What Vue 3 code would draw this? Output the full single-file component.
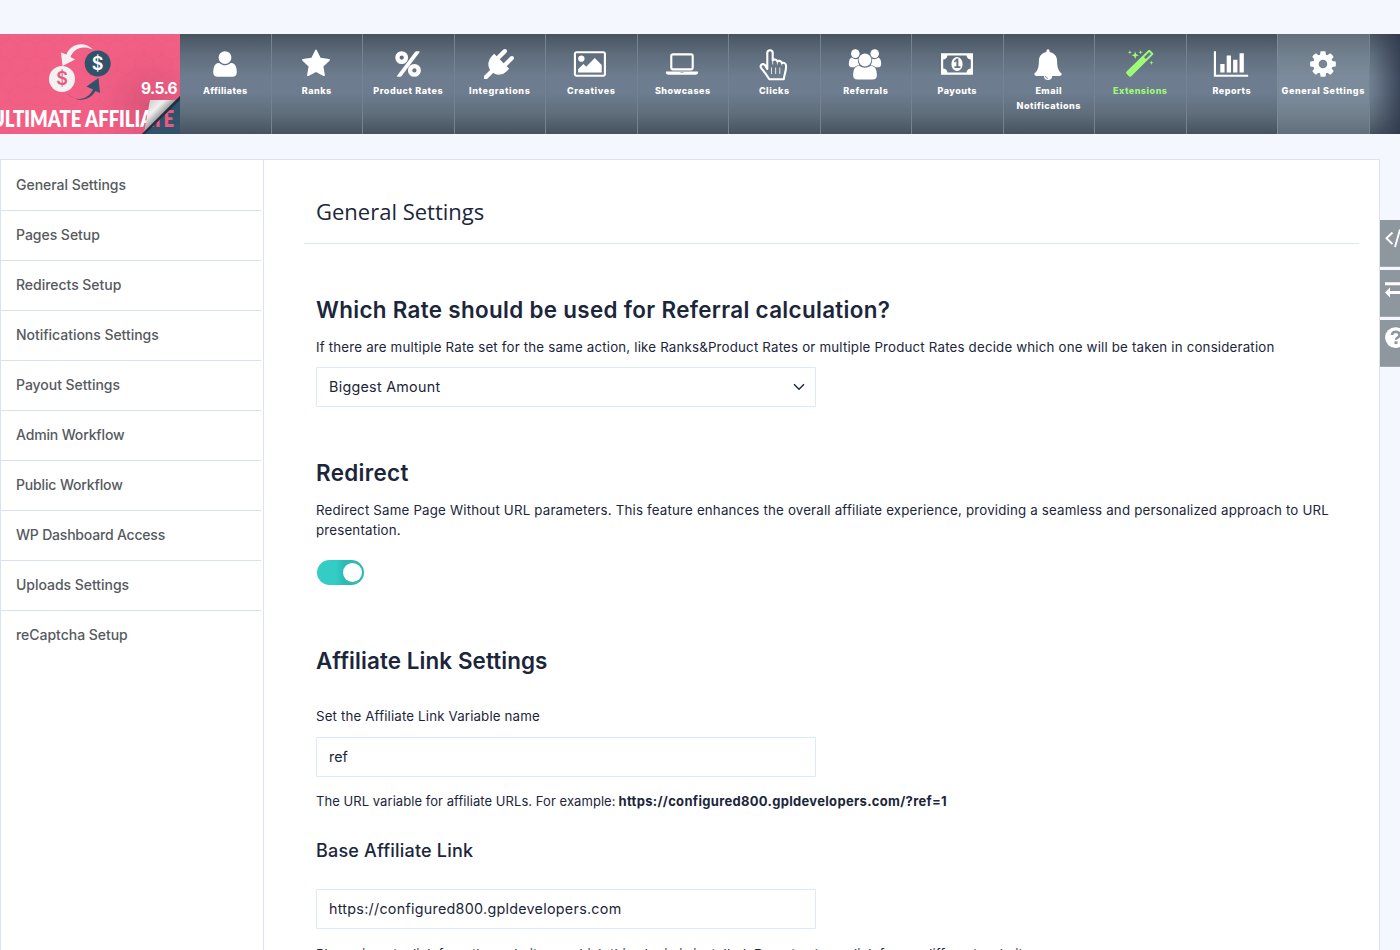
<script setup>
const tabs = [
  { id: 'user', label: 'Affiliates', cls: 'ls-s' },
  { id: 'star', label: 'Ranks', cls: 'ls-m' },
  { id: 'percent', label: 'Product Rates', cls: 'ls-l' },
  { id: 'plug', label: 'Integrations', cls: 'ls-l' },
  { id: 'image', label: 'Creatives', cls: 'ls-l' },
  { id: 'laptop', label: 'Showcases', cls: 'ls-m' },
  { id: 'hand', label: 'Clicks', cls: 'ls-m' },
  { id: 'users', label: 'Referrals', cls: 'ls-m' },
  { id: 'money', label: 'Payouts', cls: 'ls-m' },
  { id: 'bell', label: 'Email Notifications', cls: 'ls-m' },
  { id: 'magic', label: 'Extensions', cls: 'ls-m', green: true },
  { id: 'chart', label: 'Reports', cls: 'ls-m' },
  { id: 'cog', label: 'General Settings', cls: 'ls-l', active: true },
]
const paths = {
  user: 'M1600 1405q0 120-73 189.5t-194 69.5h-874q-121 0-194-69.5t-73-189.5q0-53 3.500-103.500t14-109 26.500-108.500 43-97.500 62-81 85.500-53.500 111.500-20q9 0 42 21.500t74.500 48 108 48 133.500 21.500 133.500-21.500 108-48 74.500-48 42-21.500q61 0 111.500 20t85.500 53.500 62 81 43 97.500 26.500 108.500 14 109 3.500 103.500zm-320-893q0 159-112.500 271.500t-271.500 112.500-271.500-112.500-112.500-271.500 112.500-271.500 271.500-112.500 271.500 112.500 112.500 271.500z',
  star: 'M1728 647q0 22-26 48l-363 354 86 500q1 7 1 20 0 21-10.500 35.500t-30.500 14.500q-19 0-40-12l-449-236-449 236q-22 12-40 12-21 0-31.500-14.500t-10.500-35.500q0-6 2-20l86-500-364-354q-25-27-25-48 0-37 56-46l502-73 225-455q19-41 49-41t49 41l225 455 502 73q56 9 56 46z',
  plug: 'M1755 453q37 38 37 90.500t-37 90.500l-401 400 150 150-160 160q-163 163-389.500 186.500t-411.500-100.500l-362 362h-181v-181l362-362q-124-185-100.500-411.500t186.500-389.500l160-160 150 150 400-401q38-37 91-37t90 37 37 90.500-37 90.500l-400 401 234 234 401-400q38-37 91-37t90 37z',
  image: 'M512 576q0 80-56 136t-136 56-136-56-56-136 56-136 136-56 136 56 56 136zm1024 384v448h-1408v-192l320-320 160 160 512-512zm96-704h-1600q-13 0-22.500 9.500t-9.500 22.500v1216q0 13 9.500 22.500t22.500 9.500h1600q13 0 22.500-9.500t9.500-22.500v-1216q0-13-9.500-22.500t-22.500-9.500zm160 32v1216q0 66-47 113t-113 47h-1600q-66 0-113-47t-47-113v-1216q0-66 47-113t113-47h1600q66 0 113 47t47 113z',
  laptop: 'M352 1280q-66 0-113-47t-47-113v-704q0-66 47-113t113-47h1088q66 0 113 47t47 113v704q0 66-47 113t-113 47h-1088zm-32-864v704q0 13 9.500 22.500t22.500 9.500h1088q13 0 22.500-9.500t9.500-22.500v-704q0-13-9.500-22.500t-22.500-9.500h-1088q-13 0-22.500 9.500t-9.500 22.500zm1376 928h160v96q0 40-47 68t-113 28h-1600q-66 0-113-28t-47-68v-96h1760zm-720 96q16 0 16-16t-16-16h-160q-16 0-16 16t16 16h160z',
  chart: 'M512 896v512h-256v-512h256zm384-512v1024h-256v-1024h256zm1024 1152v128h-2048v-1536h128v1408h1920zm-640-896v768h-256v-768h256zm384-384v1152h-256v-1152h256z',
  cog: 'M1152 896q0-106-75-181t-181-75-181 75-75 181 75 181 181 75 181-75 75-181zm512-109v222q0 12-8 23t-20 13l-185 28q-19 54-39 91 35 50 107 138 10 12 10 25t-9 23q-27 37-99 108t-94 71q-12 0-26-9l-138-108q-44 23-91 38-16 136-29 186-7 28-36 28h-222q-14 0-24.500-8.500t-11.500-21.500l-28-184q-49-16-90-37l-141 107q-10 9-25 9-14 0-25-11-126-114-165-168-7-10-7-23 0-12 8-23 15-21 51-66.500t54-70.500q-27-50-41-99l-183-27q-13-2-21-12.500t-8-23.500v-222q0-12 8-23t19-13l186-28q14-46 39-92-40-57-107-138-10-12-10-24 0-10 9-23 26-36 98.500-107.500t94.500-71.500q13 0 26 10l138 107q44-23 91-38 16-136 29-186 7-28 36-28h222q14 0 24.500 8.500t11.500 21.500l28 184q49 16 90 37l142-107q9-9 24-9 13 0 25 10 129 119 165 170 7 8 7 22 0 12-8 23-15 21-51 66.500t-54 70.500q26 50 41 98l183 28q13 2 21 12.500t8 23.500z',
}
const sections = [
  'General Settings', 'Pages Setup', 'Redirects Setup', 'Notifications Settings', 'Payout Settings',
  'Admin Workflow', 'Public Workflow', 'WP Dashboard Access', 'Uploads Settings', 'reCaptcha Setup',
]
</script>

<template>
  <div class="page">
    <header class="bar">
      <div class="brand">
        <svg width="180" height="100" viewBox="0 0 180 100">
          <defs>
            <pattern id="hex" width="18" height="31" patternUnits="userSpaceOnUse">
              <path d="M9 0v5l9 5v11l-9 5v5M9 5l-9 5v11l9 5" fill="none" stroke="#d94f74" stroke-opacity=".22" />
            </pattern>
            <linearGradient id="curl" x1="150" y1="66" x2="168" y2="84" gradientUnits="userSpaceOnUse">
              <stop offset="0" stop-color="#cfcfcf" />
              <stop offset=".4" stop-color="#f0f0f0" />
              <stop offset=".8" stop-color="#8d8d8d" />
            </linearGradient>
            <radialGradient id="shade" cx="150" cy="72" r="62" gradientUnits="userSpaceOnUse">
              <stop offset="0" stop-color="#a93f62" stop-opacity=".35" />
              <stop offset="1" stop-color="#d94f74" stop-opacity="0" />
            </radialGradient>
            <clipPath id="fold"><path d="M180 62v38h-38z" /></clipPath>
          </defs>
          <rect width="180" height="100" fill="#f25f85" />
          <rect width="180" height="100" fill="url(#hex)" />
          <rect width="180" height="100" fill="url(#shade)" />
          <path d="M93 15.500C84 6 70 10 66.500 20.500l-5.500-2 1.500 13.500L75 25.500l-4.500-2.500c3-8 11-12.500 22.500-7.500z" fill="#f2f2f2" />
          <path d="M67 59.500c10 10 22 5 26-4l-6.500-3L98.500 44l1.500 15-4.500-2c-5 9-17 13-28.500 2.500z" fill="#31526a" />
          <circle cx="97.700" cy="29.500" r="13" fill="#31526a" />
          <circle cx="62" cy="45" r="13" fill="#f2f2f2" />
          <text class="coin" x="97.700" y="35.500" fill="#fff">$</text>
          <text class="coin" x="62" y="51" fill="#e95a80">$</text>
          <text class="name" x="-9" y="93.300" textLength="183" lengthAdjust="spacingAndGlyphs" fill="#fff">ULTIMATE AFFILIATE</text>
          <path d="M150 66h27l-33 33z" fill="url(#curl)" />
          <path d="M180 62v38h-38z" fill="#31526a" />
          <text class="name" x="-9" y="93.300" textLength="183" lengthAdjust="spacingAndGlyphs" fill="#e95a80" clip-path="url(#fold)">ULTIMATE AFFILIATE</text>
          <path d="M180 62l-38 38h3l35-34z" fill="#22303f" />
        </svg>
        <span class="version">9.5.6</span>
      </div>
      <nav class="tabs">
        <a v-for="t in tabs" :key="t.id" class="tab" :class="{ active: t.active, green: t.green }">
          <svg v-if="paths[t.id]" class="ico" :class="t.id" width="34" height="30" viewBox="-119 0 2031 1792"><path :d="paths[t.id]" /></svg>
          <svg v-else-if="t.id === 'percent'" class="ico" width="34" height="30" viewBox="0 0 34 30">
            <g fill="none" stroke="currentColor" stroke-width="4.300"><circle cx="10.700" cy="8.600" r="4.300" /><circle cx="23.400" cy="21.400" r="4.300" /></g>
            <path d="M25.500 2.200h2.300q1.500 0 .6 1.400L10.600 27.100q-.5.700-1.300.7H6.900q-1.500 0-.6-1.400L24 3.100q.6-.9 1.500-.9z" />
          </svg>
          <svg v-else-if="t.id === 'hand'" class="ico tall nudge" width="34" height="34" viewBox="0 0 34 34">
            <path fill="none" stroke="currentColor" stroke-width="2.100" stroke-linejoin="round" d="M11.300 20V4a2.700 2.700 0 0 1 5.400 0v7.500c1-1.600 4.200-1.300 4.700 1 1.500-1.300 4-.6 4.400 1.500 2.200-.8 4.300.4 4.300 3.200 0 5.500-1.700 7.300-2.300 13H13.300C11 26.500 8.500 23 5.500 19.500c-2.300-2.800.8-5.800 3.500-3.400z" />
            <path fill="none" stroke="currentColor" stroke-width=".8" d="M16.700 11v4.500M21.400 12.500v3M25.800 14v2.500M15.500 18.500v6.500M19.600 18.500v6.500M23.800 18.500v6.500" />
          </svg>
          <svg v-else-if="t.id === 'users'" class="ico tall" width="34" height="34" viewBox="0 0 34 34">
            <circle cx="7.300" cy="4.600" r="4.300" /><circle cx="26.700" cy="4.600" r="4.300" />
            <path d="M3.500 8.500q3.800 2.600 6.300 1.200-.4 3.600 1.600 6.500-3.200.1-5 2.100H4.300Q.8 18.300.8 15.200q0-5.300 2.700-6.700zM30.500 8.500q-3.800 2.600-6.300 1.200.4 3.600-1.600 6.500 3.200.1 5 2.100h2.100q3.500 0 3.500-3.100 0-5.300-2.700-6.700z" />
            <circle cx="17" cy="11" r="6.400" />
            <path d="M11 16.700q5.800 4.300 12 0 5.900.6 5.900 9.300 0 4.600-4.500 4.600H9.600q-4.500 0-4.500-4.600 0-8.700 5.900-9.300z" />
          </svg>
          <svg v-else-if="t.id === 'money'" class="ico" width="34" height="30" viewBox="0 0 34 30">
            <path fill-rule="evenodd" d="M1 4.300h32v21.400H1zM7.400 6.400A4.200 4.200 0 0 1 3.200 10.600v8.800a4.200 4.200 0 0 1 4.200 4.200h19.200a4.200 4.200 0 0 1 4.200-4.200v-8.800a4.200 4.200 0 0 1-4.200-4.200z" />
            <ellipse cx="17" cy="15" rx="5.600" ry="6.900" />
            <path class="cut" d="M13.800 12.200l2.800-2.600h1.800v7.700h2v1.600h-6v-1.600h2v-5l-1.400 1.200z" />
          </svg>
          <svg v-else-if="t.id === 'bell'" class="ico tall" width="34" height="34" viewBox="0 0 34 34">
            <path d="M17 .2q1.600 0 1.600 1.700v1.200c5.200.9 7.500 4.800 7.500 9.200 0 6.600 1.600 9.900 4.700 12.500 0 1.200-.9 2.100-2.100 2.100h-7.600a4.100 4.100 0 0 1-8.200 0H5.300a2.100 2.100 0 0 1-2.100-2.100c3.100-2.600 4.700-5.900 4.700-12.500 0-4.400 2.300-8.300 7.500-9.200V1.900Q15.400.2 17 .2z" />
            <path class="line" d="M14.400 26.900q.2 2.400 2.600 2.500" />
          </svg>
          <svg v-else class="ico" width="34" height="30" viewBox="0 0 34 30">
            <path d="M3.400 22.800L25.300 1.200q.9-.8 1.800 0l2.800 2.700q.9.900 0 1.800L8 27.400q-.9.800-1.800 0l-2.800-2.800q-.8-.9 0-1.800z" />
            <path class="cut" d="M21 8.200l5.200-5.200 1.900 1.900-5.200 5.200z" />
            <path d="M12.200 2.500l1 2.700 2.700 1-2.700 1-1 2.700-1-2.700-2.700-1 2.700-1zM6.900 1l.5 1.700 1.700.5-1.700.5-.5 1.700-.5-1.700-1.700-.5 1.700-.5zM17.600 1l.5 1.700 1.700.5-1.700.5-.5 1.700-.5-1.700-1.700-.5 1.700-.5zM28.400 11.600l.5 1.700 1.700.5-1.700.5-.5 1.700-.5-1.700-1.700-.5 1.700-.5z" />
          </svg>
          <span class="label" :class="t.cls">{{ t.label }}</span>
        </a>
      </nav>
    </header>

    <div class="panel">
      <aside class="side">
        <a v-for="s in sections" :key="s" class="side-item">{{ s }}</a>
      </aside>
      <main class="main">
        <h1 class="title">General Settings</h1>
        <div class="form">
          <h2 class="h2">Which Rate should be used for Referral calculation?</h2>
          <p class="desc">If there are multiple Rate set for the same action, like Ranks&amp;Product Rates or multiple Product Rates decide which one will be taken in consideration</p>
          <div class="field select">
            <span>Biggest Amount</span>
            <svg class="caret" width="12" height="8" viewBox="0 0 12 8"><path d="M1 1.300l5 5 5-5" fill="none" stroke="#1f2a3d" stroke-width="1.500" /></svg>
          </div>

          <h2 class="h2">Redirect</h2>
          <p class="desc">Redirect Same Page Without URL parameters. This feature enhances the overall affiliate experience, providing a seamless and personalized approach to URL<br>presentation.</p>
          <div class="switch"><i class="knob"></i></div>

          <h2 class="h2 link-head">Affiliate Link Settings</h2>
          <p class="desc name-label">Set the Affiliate Link Variable name</p>
          <div class="field name-field">ref</div>
          <p class="desc hint"><span class="hint-text">The URL variable for affiliate URLs. For example:</span> <strong>https://configured800.gpldevelopers.com/?ref=1</strong></p>
          <h3 class="h3">Base Affiliate Link</h3>
          <div class="field url-field">https://configured800.gpldevelopers.com</div>
          <p class="desc last">Please insert a link from the website on which this plugin is installed. Do not set up a link from a different website.</p>
        </div>
      </main>
    </div>

    <div class="dock">
      <div class="dock-item">
        <svg width="32" height="47" viewBox="0 0 32 47"><path d="M12.500 12.500L6.500 18.300l6 5.800M20 9.500l-5 17.500" fill="none" stroke="#fff" stroke-width="1.900" /></svg>
      </div>
      <div class="dock-item">
        <svg width="32" height="47" viewBox="0 0 32 47"><path d="M5 12.300h22v3H5zM5 22.500l5-5v3.400h17v3.200H10v3.400z" fill="#fff" /></svg>
      </div>
      <div class="dock-item">
        <svg width="32" height="47" viewBox="0 0 32 47">
          <circle cx="15.500" cy="17.600" r="10.400" fill="#fff" />
          <path d="M12 15q.3-3.300 3.800-3.300 3.700.2 3.700 3 0 1.800-1.900 2.900-1.600.8-1.600 2.100" fill="none" stroke="#8f979e" stroke-width="2.600" />
          <path d="M14.500 21.300h3v2.800h-3z" fill="#8f979e" />
        </svg>
      </div>
    </div>
  </div>
</template>

<style>
html, body { margin: 0; background: #f4f7fe; }
body { overflow: hidden; }
</style>

<style scoped>
.page { position: relative; height: 950px; overflow: hidden; padding-top: 34px; box-sizing: border-box; background: #f4f7fe; font-family: Inter, "Open Sans", sans-serif; color: #1b263b; }
.bar { display: flex; height: 100px; background: linear-gradient(90deg, transparent 1372px, rgba(42, 52, 72, .75) 1400px), linear-gradient(#47535f, #5e6c7b 20%, #6d7c8e 42%, #6d7c8e 60%, #5f6d7b 80%, #46525e); }
.brand { position: relative; width: 180px; flex: none; overflow: hidden; }
.brand svg { display: block; }
.coin { font: 600 18px Inter, sans-serif; text-anchor: middle; }
.name { font: 800 22.300px Lato, sans-serif; }
.version { position: absolute; right: 3px; top: 45px; font: 700 15.500px/20px Inter, sans-serif; letter-spacing: -.6px; color: #fff; }
.tabs { display: flex; }
.tab { display: flex; flex-direction: column; align-items: center; position: relative; width: 91.500px; box-sizing: border-box; border-right: 1px solid #748292; padding-top: 15px; color: #fff; }
.tab.green { color: #9dfb78; }
.tab.active { background: rgba(157, 170, 182, .32); box-shadow: -1px 0 #7d8a99; }
.ico { flex: none; overflow: visible; fill: currentColor; margin: 0 1px 4px 0; }
.ico.tall { margin-bottom: 0; }
.ico.nudge { margin-right: 2px; }
.ico.image { margin-right: 0; }
.cut { fill: #66768a; }
.line { fill: none; stroke: #66768a; stroke-width: .8; }
.label { font-size: 9px; font-weight: 800; line-height: 15px; text-align: center; width: 88px; }
.ls-s { letter-spacing: .36px; }
.ls-m { letter-spacing: .5px; }
.ls-l { letter-spacing: .6px; }
.panel { display: flex; width: 1380px; height: 800px; margin-top: 25px; box-sizing: border-box; border: 1px solid #dbe3f1; background: #fff; }
.side { width: 260px; flex: none; border-right: 1px solid #dbe3f1; padding-right: 2px; }
.side-item { display: block; height: 50px; line-height: 48px; padding-left: 15px; font-size: 14px; font-weight: 500; letter-spacing: -.03px; color: #555a60; border-bottom: 1px solid #d9e1ed; box-sizing: border-box; }
.side-item:first-child { height: 51px; line-height: 50px; }
.side-item:last-child { border: 0; }
.side-item:nth-child(6), .side-item:nth-child(7) { letter-spacing: -.15px; }
.side-item:nth-child(8) { letter-spacing: -.2px; }
.main { flex: 1; min-width: 0; padding: 0 20px 0 40px; }
.title { margin: 0; padding: 36px 12px 17px; font: 400 22px/30px "Open Sans", sans-serif; border-bottom: 1px solid #dfe8fa; }
.form { padding: 0 0 0 12px; }
.h2 { margin: 51px 0 0; font-size: 22.400px; line-height: 30px; font-weight: 600; letter-spacing: .33px; }
.desc { position: relative; top: -1px; margin: 13px 0 0; font-size: 13.300px; line-height: 20px; letter-spacing: .184px; white-space: nowrap; }
.field { display: flex; align-items: center; width: 500px; height: 40px; box-sizing: border-box; border: 1px solid #dce8fb; border-radius: 1px; padding: 0 10px 2px 12px; font-size: 14.300px; letter-spacing: .28px; }
.select { margin-top: 9px; justify-content: space-between; }
.caret { position: relative; top: 1px; }
.switch { width: 47px; height: 25px; margin: 19px 0 0 1px; border-radius: 13px; box-sizing: border-box; padding: 3px 2.500px; display: flex; justify-content: flex-end; background: linear-gradient(90deg, #33cdc5 40%, #2bbab4 58%); }
.knob { width: 19px; height: 19px; border-radius: 50%; background: #fff; }
.link-head { margin-top: 61px; letter-spacing: .1px; }
.name-label { margin-top: 31px; letter-spacing: .15px; }
.name-field { margin-top: 10px; letter-spacing: 0; }
.hint { margin-top: 15px; font-size: 13px; }
.hint-text { letter-spacing: .057px; }
.hint strong { margin-left: -.800px; font-weight: 700; letter-spacing: .31px; }
.h3 { margin: 27px 0 0; font-size: 18px; line-height: 24px; font-weight: 500; letter-spacing: .19px; }
.url-field { margin-top: 26px; }
.last { top: 0; margin-top: 15px; letter-spacing: .06px; }
.dock { position: absolute; left: 1380px; top: 220px; width: 32px; display: grid; gap: 3px; }
.dock-item { height: 47px; background: #8f979e; box-shadow: inset 0 -1px #a0a7ae; overflow: hidden; }
.dock-item svg { display: block; }
</style>
